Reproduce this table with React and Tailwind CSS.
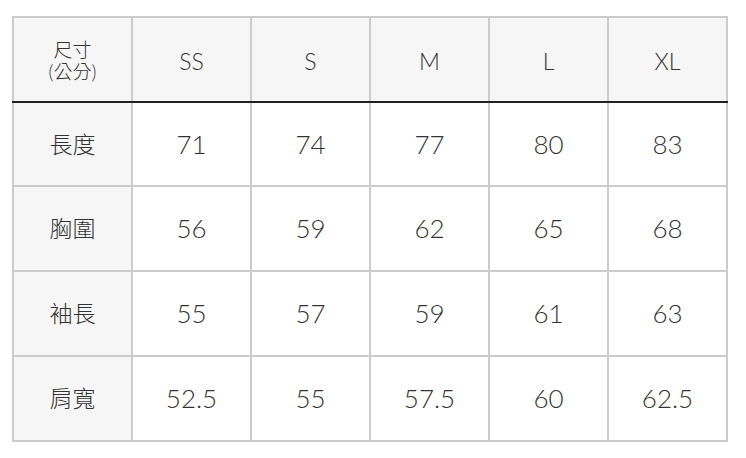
const sizes = ["SS", "S", "M", "L", "XL"];

const rows = [
  { label: "長度", values: ["71", "74", "77", "80", "83"] },
  { label: "胸圍", values: ["56", "59", "62", "65", "68"] },
  { label: "袖長", values: ["55", "57", "59", "61", "63"] },
  { label: "肩寬", values: ["52.5", "55", "57.5", "60", "62.5"] },
];

export default function App() {
  return (
    <div className="w-[746px] h-[458px] bg-white pt-[16px] pl-[12px] text-[#333333] font-['Lato','Noto_Sans_CJK_TC',sans-serif]">
      <div className="w-[716px] border-2 border-[#cccccc] bg-[#cccccc]">
        <div className="grid grid-cols-[repeat(6,117px)] gap-x-[2px] h-[83px]">
          <div className="bg-[#f6f6f6] flex flex-col items-center justify-center pt-[2px] text-[19px] leading-[22px] font-light">
            <span className="block">尺寸</span>
            <span className="block">(公分)</span>
          </div>
          {sizes.map((s) => (
            <div
              key={s}
              className="bg-[#f6f6f6] flex items-center justify-center pt-[4px] text-[23px] font-light"
            >
              {s}
            </div>
          ))}
        </div>
        <div className="-mx-[2px] h-[2px] bg-[#222222]" />
        <div className="grid grid-cols-[repeat(6,117px)] grid-rows-[82px_83px_83px_83px] gap-[2px]">
          {rows.map((r) => (
            <>
              <div
                key={r.label}
                className="bg-[#f6f6f6] flex items-center justify-center text-[23px] font-light"
              >
                {r.label}
              </div>
              {r.values.map((v, i) => (
                <div
                  key={r.label + i}
                  className="bg-white flex items-center justify-center text-[26px] font-light"
                >
                  {v}
                </div>
              ))}
            </>
          ))}
        </div>
      </div>
    </div>
  );
}
